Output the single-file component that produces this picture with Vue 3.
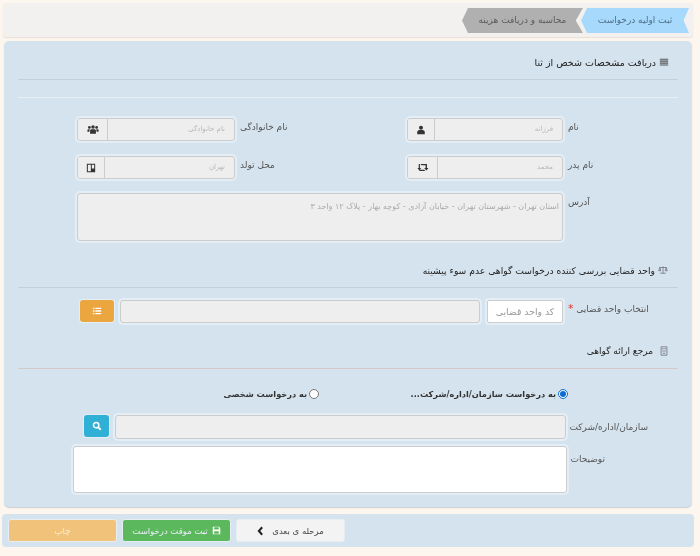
<script setup>
const sections = {
  one: 'دریافت مشخصات شخص از ثنا',
  two: 'واحد قضایی بررسی کننده درخواست گواهی عدم سوء پیشینه',
  three: 'مرجع ارائه گواهی'
}
</script>

<template>
  <div class="page" dir="rtl">
    <nav class="steps">
      <div class="step active">ثبت اولیه درخواست</div>
      <div class="step next">محاسبه و دریافت هزینه</div>
    </nav>

    <main class="panel">
      <h3 class="title first">
        <svg class="ti" viewBox="0 0 12 12"><path d="M1 2h10v1.400H1zM1 4.300h10v1.400H1zM1 6.600h10V8H1zM1 8.900h10v1.400H1z" fill="#555"/></svg>
        {{ sections.one }}
      </h3>
      <div class="light-rule"></div>

      <div class="pair">
        <label class="lab">نام</label>
        <div class="group">
          <div class="val"><span>فرزانه</span></div>
          <div class="addon a27">
            <svg viewBox="0 0 12 12" class="ic"><circle cx="6" cy="3.400" r="2.400" fill="#333"/><path d="M1.500 11V8.600C1.500 7 3 6 4.200 6h3.600c1.200 0 2.700 1 2.700 2.600V11z" fill="#333"/></svg>
          </div>
        </div>
        <label class="lab">نام خانوادگی</label>
        <div class="group">
          <div class="val"><span>نام خانوادگی</span></div>
          <div class="addon a30">
            <svg viewBox="0 0 14 12" class="ic big"><circle cx="7" cy="3" r="2" fill="#333"/><circle cx="2.800" cy="3.600" r="1.600" fill="#333"/><circle cx="11.200" cy="3.600" r="1.600" fill="#333"/><path d="M3.600 11V7.400c0-1 1-1.700 2-1.700h2.800c1 0 2 .7 2 1.700V11zM.5 8.600V6.800c0-.7.6-1.200 1.400-1.200h1.300L2.800 8.600zM13.500 8.600V6.800c0-.7-.6-1.200-1.400-1.200h-1.300l.4 3z" fill="#333"/></svg>
          </div>
        </div>
      </div>

      <div class="pair second">
        <label class="lab">نام پدر</label>
        <div class="group">
          <div class="val"><span>محمد</span></div>
          <div class="addon a30r">
            <svg viewBox="0 0 14 12" class="ic big"><path d="M2 2h1.400v4.600h1.500L2.700 9.600.5 6.600H2zM4 2h7.600v4.600h1.800l-2.500 3-2.500-3h1.600V3.400H5.300zM9.700 10H2.500v-.1l1.300-1.300h4.600z" fill="#333"/></svg>
          </div>
        </div>
        <label class="lab">محل تولد</label>
        <div class="group">
          <div class="val"><span>تهران</span></div>
          <div class="addon a27b">
            <svg viewBox="0 0 12 12" class="ic"><path d="M1 1h10v10H1zm1.200 1.200v7.600h3.600V2.200zm4.800 0v4.400h2.800V2.200z" fill="#333" fill-rule="evenodd"/></svg>
          </div>
        </div>
      </div>

      <div class="addr">
        <label class="lab">آدرس</label>
        <div class="area ro"><span>استان تهران - شهرستان تهران - خیابان آزادی - کوچه بهار - پلاک ۱۲ واحد ۳</span></div>
      </div>

      <h3 class="title two">
        <svg class="ti" viewBox="0 0 14 12"><path d="M7 1v9.500M3 10.500h8M2 2.500h10M2.500 2.500 1 7h3zM11.500 2.500 10 7h3z" fill="none" stroke="#667" stroke-width="1"/></svg>
        {{ sections.two }}
      </h3>

      <div class="unit">
        <label class="lab">انتخاب واحد قضایی <span class="req">*</span></label>
        <div class="code">کد واحد قضایی</div>
        <div class="wide ro"></div>
        <button class="btn-orange" type="button">
          <svg viewBox="0 0 12 12" class="ic"><path d="M1 2h2v1.600H1zM4 2h7v1.600H4zM1 5.200h2v1.600H1zM4 5.200h7v1.600H4zM1 8.400h2V10H1zM4 8.400h7V10H4z" fill="#fff"/></svg>
        </button>
      </div>

      <h3 class="title three">
        <svg class="ti" viewBox="0 0 12 12"><path d="M2.500 1h7v10h-7zM4 3h1.500M6.500 3H8M4 5h1.500M6.500 5H8M4 7h1.500M6.500 7H8M5 9h2" fill="none" stroke="#667" stroke-width=".9"/></svg>
        {{ sections.three }}
      </h3>

      <div class="radios">
        <label class="radio r1"><input type="radio" name="kind" checked />به درخواست سازمان/اداره/شرکت...</label>
        <label class="radio"><input type="radio" name="kind" />به درخواست شخصی</label>
      </div>

      <div class="org">
        <label class="lab">سازمان/اداره/شرکت</label>
        <div class="wide ro"></div>
        <button class="btn-blue" type="button">
          <svg viewBox="0 0 12 12" class="ic"><circle cx="5" cy="5" r="3.200" fill="none" stroke="#fff" stroke-width="1.800"/><path d="M7.300 7.300 10.500 10.500" stroke="#fff" stroke-width="2.200"/></svg>
        </button>
      </div>

      <div class="notes">
        <label class="lab">توضیحات</label>
        <div class="area white"></div>
      </div>
    </main>

    <footer class="foot">
      <button class="fbtn gray" type="button">مرحله ی بعدی
        <svg viewBox="0 0 8 12" class="chev"><path d="M6 1.500 2 6l4 4.500" fill="none" stroke="#222" stroke-width="2.400"/></svg>
      </button>
      <button class="fbtn green" type="button">
        <svg viewBox="0 0 12 12" class="save"><path d="M1 1h8.500L11 2.500V11H1zM3 1.800v3h6v-3zM3 7v3.200h6V7z" fill="#fff" fill-rule="evenodd"/></svg>
        ثبت موقت درخواست
      </button>
      <button class="fbtn amber" type="button">چاپ</button>
    </footer>
  </div>
</template>

<style scoped>
.page {
  width: 700px;
  height: 556px;
  box-sizing: border-box;
  overflow: hidden;
  background: #fdf6ee;
  padding-top: 3px;
  font-family: "DejaVu Sans", "Liberation Sans", sans-serif;
  font-size: 9px;
  color: #555;
  filter: blur(0.3px);
}
.steps {
  height: 34px;
  margin: 0 7px 0 3px;
  box-sizing: border-box;
  padding: 5px 4px 0 0;
  display: flex;
  background: #f2f1f0;
  border-radius: 3px;
  box-shadow: 0 1px 1px #e8e0d8;
}
.step {
  height: 25px;
  line-height: 24px;
  text-align: center;
  font-size: 9px;
}
.active {
  width: 108px;
  background: #a6d9fb;
  color: #4f6f86;
  clip-path: polygon(100% 0, 95% 50%, 100% 100%, 6px 100%, 0 50%, 6px 0);
}
.next {
  width: 121px;
  margin-right: -2px;
  background: #b0b0b0;
  color: #5c5c5c;
  clip-path: polygon(100% 0, 94% 50%, 100% 100%, 6px 100%, 0 50%, 6px 0);
}
.panel {
  height: 466px;
  width: 688px;
  margin: 4px 8px 0 4px;
  box-sizing: border-box;
  padding: 0 14px 0 14px;
  background: #d5e3ee;
  border-radius: 5px;
  box-shadow: 0 1px 1px #c8d0d6;
}
.title {
  margin: 0;
  font-size: 9.500px;
  font-weight: normal;
  color: #222;
  display: flex;
  align-items: center;
  gap: 3px;
  padding-right: 9px;
  border-bottom: 1px solid #c3d0da;
  box-sizing: border-box;
}
.first { height: 39px; padding-top: 4px; }
.two { height: 31px; margin-top: 16px; padding-bottom: 4px; font-size: 9.200px; gap: 3px; padding-right: 10px; }
.three { height: 32px; margin-top: 14px; padding-bottom: 3px; border-bottom-color: #d3c9c9; font-size: 9px; gap: 6px; }
.ti { width: 10px; height: 10px; flex: none; }
.light-rule {
  height: 1px;
  margin-top: 17px;
  background: #e8f0f6;
}
.pair {
  display: grid;
  grid-template-columns: 115px 156px 172px 158px;
  height: 23px;
  margin-top: 20px;
}
.second { margin-top: 15px; }
.lab {
  text-align: left;
  padding-left: 5px;
  font-size: 9px;
  line-height: 18px;
  color: #555;
  white-space: nowrap;
}
.group {
  display: flex;
  border: 1px solid #ccc;
  border-radius: 3px;
  box-shadow: 0 0 0 2px #e3eef7;
  background: #eee;
  box-sizing: border-box;
  overflow: hidden;
}
.val {
  flex: 1;
  padding: 0 9px;
  line-height: 21px;
  color: #b8b8b8;
  font-size: 7px;
}
.val span, .area span { filter: blur(0.7px); display: inline-block; }
.addon {
  flex: none;
  display: flex;
  align-items: center;
  justify-content: center;
  background: #eee;
  border-right: 1px solid #ccc;
}
.a27 { width: 26px; }
.a30 { width: 29px; }
.a30r { width: 29px; }
.a27b { width: 26px; }
.ic { width: 10px; height: 10px; }
.big { width: 12px; height: 11px; }
.addr {
  display: grid;
  grid-template-columns: 115px 486px;
  height: 48px;
  margin-top: 14px;
}
.area {
  border: 1px solid #ccc;
  border-radius: 3px;
  box-shadow: 0 0 0 2px #e3eef7;
  box-sizing: border-box;
  padding: 8px 3px;
  font-size: 8px;
  color: #aaa;
  white-space: nowrap;
  overflow: hidden;
}
.ro { background: #eee; }
.white { background: #fff; }
.unit {
  display: grid;
  grid-template-columns: 115px 76px 373px 34px;
  height: 23px;
  margin-top: 12px;
}
.unit .wide { margin: 0 7px 0 6px; }
.req { color: #d33; font-size: 11px; }
.code {
  background: #fff;
  border: 1px solid #ccc;
  border-radius: 2px;
  box-shadow: 0 0 0 2px #e3eef7;
  text-align: center;
  line-height: 21px;
  font-size: 9.300px;
  color: #999;
  box-sizing: border-box;
}
.wide {
  border: 1px solid #ccc;
  border-radius: 3px;
  box-shadow: 0 0 0 2px #e3eef7;
  box-sizing: border-box;
}
.btn-orange, .btn-blue {
  padding: 0;
  border: 0;
  border-radius: 3px;
  display: flex;
  align-items: center;
  justify-content: center;
  box-shadow: 0 0 0 1px #e3eef7;
}
.btn-orange { background: #eba63f; width: 34px; height: 22px; }
.radios {
  display: flex;
  margin-top: 18px;
  padding-right: 110px;
  height: 14px;
  align-items: center;
}
.radio {
  display: flex;
  align-items: center;
  gap: 2px;
  font-size: 8.200px;
  font-weight: bold;
  color: #333;
  white-space: nowrap;
}
.r1 { width: 249px; }
.radio input {
  width: 10px;
  height: 10px;
  margin: 0;
  accent-color: #0b6cd4;
}
.org {
  display: grid;
  grid-template-columns: 112px 457px 25px;
  height: 23px;
  margin-top: 14px;
}
.org .wide { margin: 0 0 0 6px; background: #eee; }
.org .lab { padding-left: 0; padding-right: 30px; line-height: 24px; text-align: right; }
.btn-blue { background: #31b0d5; width: 25px; height: 22px; }
.notes {
  display: grid;
  grid-template-columns: 111px 494px;
  height: 47px;
  margin-top: 8px;
}
.notes .lab { padding-right: 73px; text-align: right; line-height: 26px; }
.foot {
  width: 692px;
  height: 33px;
  margin: 7px 6px 0 2px;
  box-sizing: border-box;
  padding: 5px 0 0 6px;
  background: #d5e3ee;
  border-radius: 4px;
  display: flex;
  flex-direction: row-reverse;
  justify-content: flex-end;
  gap: 5px;
  direction: ltr;
}
.fbtn {
  width: 109px;
  height: 23px;
  border-radius: 3px;
  font-family: inherit;
  font-size: 8.500px;
  display: flex;
  align-items: center;
  justify-content: center;
  gap: 4px;
  direction: rtl;
  border: 1px solid #e6eef4;
  box-sizing: border-box;
  padding: 0;
}
.gray { background: #f3f3f3; color: #444; }
.green { background: #5cb85c; color: #eef; }
.amber { background: #f1c27a; color: #fbeed8; }
.chev { width: 7px; height: 10px; margin-right: 4px; }
.save { width: 9px; height: 9px; }
</style>
